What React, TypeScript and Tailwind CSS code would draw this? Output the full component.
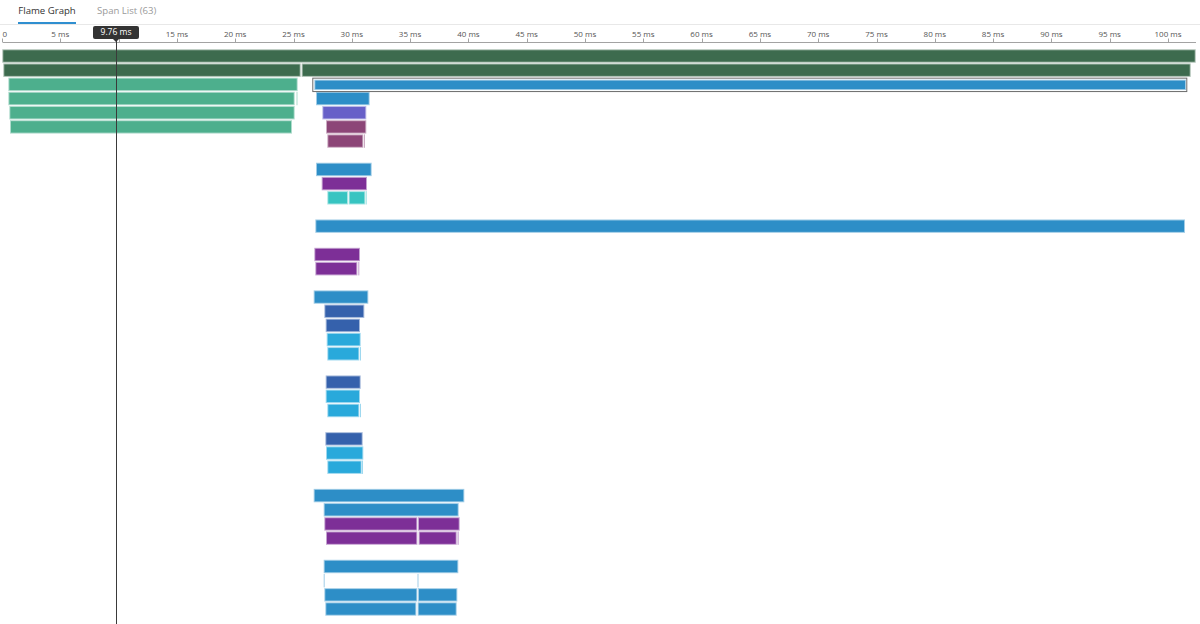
import React from 'react';

const G0 = '#3d6b4e';
const G1 = '#4daf8d';
const B = '#2d8ec7';
const PB = '#6760c8';
const M = '#8c4577';
const P = '#7d2f97';
const T = '#37c4c1';
const DB = '#3561ac';
const LB = '#29a9db';

// [row, x1, x2, colour]
const bars: [number, number, number, string][] = [
  [0, 2.3, 1195.7, G0],
  [1, 3.3, 300.7, G0],
  [1, 301.7, 1190.7, G0],
  [2, 8.3, 297.7, G1],
  [3, 8.3, 294.7, G1],
  [3, 296.5, 297.5, G1],
  [3, 316, 369.7, B],
  [4, 9.3, 294.7, G1],
  [4, 322.3, 366.3, PB],
  [5, 10, 292, G1],
  [5, 326, 366.3, M],
  [6, 327.3, 363.3, M],
  [6, 364, 365, M],
  [8, 316, 371.7, B],
  [9, 321.7, 367, P],
  [10, 327.3, 348, T],
  [10, 348.7, 365.3, T],
  [10, 365.8, 366.8, T],
  [12, 315.3, 1185, B],
  [14, 314.3, 360, P],
  [15, 315.3, 357.3, P],
  [15, 358.3, 359.3, P],
  [17, 313.7, 368.3, B],
  [18, 324.3, 364.3, DB],
  [19, 325.7, 360, DB],
  [20, 326.7, 360.7, LB],
  [21, 327.3, 359.3, LB],
  [21, 360, 361, LB],
  [23, 325.7, 360.7, DB],
  [24, 325.7, 360, LB],
  [25, 327.3, 359.3, LB],
  [25, 360, 361, LB],
  [27, 325.3, 362.7, DB],
  [28, 326, 363.3, LB],
  [29, 327.3, 361.7, LB],
  [29, 362, 363, LB],
  [31, 313.7, 464.3, B],
  [32, 323.7, 458.7, B],
  [33, 324.3, 417.3, P],
  [33, 418, 459.7, P],
  [34, 326, 417.3, P],
  [34, 418.7, 456.7, P],
  [34, 457.5, 458.7, P],
  [36, 323.7, 458.3, B],
  [37, 323.7, 324.7, B],
  [37, 417.5, 418.5, B],
  [38, 324.3, 417.3, B],
  [38, 418, 457.3, B],
  [39, 325.3, 416.3, B],
  [39, 417.7, 456.7, B],
];

const TOP = 25; // svg starts under the tab bar
const rowY = (r: number) => 49.3 + r * 14.18 - TOP;
const H = 13.4;
const pxPerMs = 11.66;
const msX = (ms: number) => 2 + ms * pxPerMs;
const cursorMs = 9.76;

function Bar({ row, x1, x2, color }: { row: number; x1: number; x2: number; color: string }) {
  const y = rowY(row);
  const w = x2 - x1;
  return (
    <g>
      <rect x={x1} y={y} width={w} height={H} fill={color} fillOpacity={0.45} />
      {w > 3 && <rect x={x1 + 1} y={y + 1} width={w - 2} height={H - 2} fill={color} />}
    </g>
  );
}

export default function App() {
  const ticks = Array.from({ length: 21 }, (_, i) => i * 5);

  return (
    <div className="w-[1200px] h-[624px] bg-white overflow-hidden font-['Open_Sans',sans-serif]">
      {/* Tabs */}
      <div className="flex h-[25px] border-b border-[#e8e8e8] pl-[18px] gap-[20px]">
        <div className="flex flex-col w-[58px]">
          <div className="flex-1 flex items-center justify-center text-[9.6px] text-[#333]">Flame Graph</div>
          <div className="h-[2px] bg-[#2f8fd0]" />
        </div>
        <div className="flex flex-col">
          <div className="flex-1 flex items-center px-[1px] text-[9.6px] text-[#9a9a9a]">Span List (63)</div>
          <div className="h-[2px]" />
        </div>
      </div>

      {/* Flame graph */}
      <div className="relative h-[599px]">
        <svg width={1200} height={599} className="block">
          {/* axis */}
          <line x1={3} y1={17.5} x2={1196} y2={17.5} stroke="#a3a3a3" strokeWidth={1} />
          {ticks.map((ms) => {
            const x = Math.round(msX(ms)) + 0.5;
            // the label under the cursor tooltip is hidden
            const hidden = Math.abs(ms - cursorMs) < 2;
            return (
              <g key={ms}>
                <line x1={x} y1={13.5} x2={x} y2={17.5} stroke="#a3a3a3" strokeWidth={1} />
                {!hidden && (
                  <text
                    x={ms === 0 ? 2.5 : msX(ms)}
                    y={11.5}
                    fontSize={8}
                    fill="#555"
                    textAnchor={ms === 0 ? 'start' : 'middle'}
                    fontFamily="Open Sans, sans-serif"
                  >
                    {ms === 0 ? '0' : `${ms} ms`}
                  </text>
                )}
              </g>
            );
          })}

          {bars.map(([row, x1, x2, color], i) => (
            <Bar key={i} row={row} x1={x1} x2={x2} color={color} />
          ))}

          {/* selected span */}
          <rect x={312.8} y={rowY(2) + 0.5} width={874} height={H} fill="#fff" stroke="#6b6b6b" strokeWidth={1} />
          <rect x={314.3} y={rowY(2) + 2} width={871.7} height={H - 3} fill={B} fillOpacity={0.45} />
          <rect x={315.3} y={rowY(2) + 3} width={869.7} height={H - 5} fill={B} />

          {/* cursor */}
          <line x1={116.5} y1={14} x2={116.5} y2={599} stroke="#3a3a3a" strokeWidth={1} />
        </svg>

        {/* cursor tooltip */}
        <div className="absolute left-[93px] top-[1px] w-[46px] h-[13px] rounded-[2px] bg-[#333] flex items-center justify-center text-[8.5px] text-white leading-none">
          9.76 ms
          <svg width={6} height={3} className="absolute left-[20px] top-[13px]">
            <polygon points="0,0 6,0 3,3" fill="#333" />
          </svg>
        </div>
      </div>
    </div>
  );
}
